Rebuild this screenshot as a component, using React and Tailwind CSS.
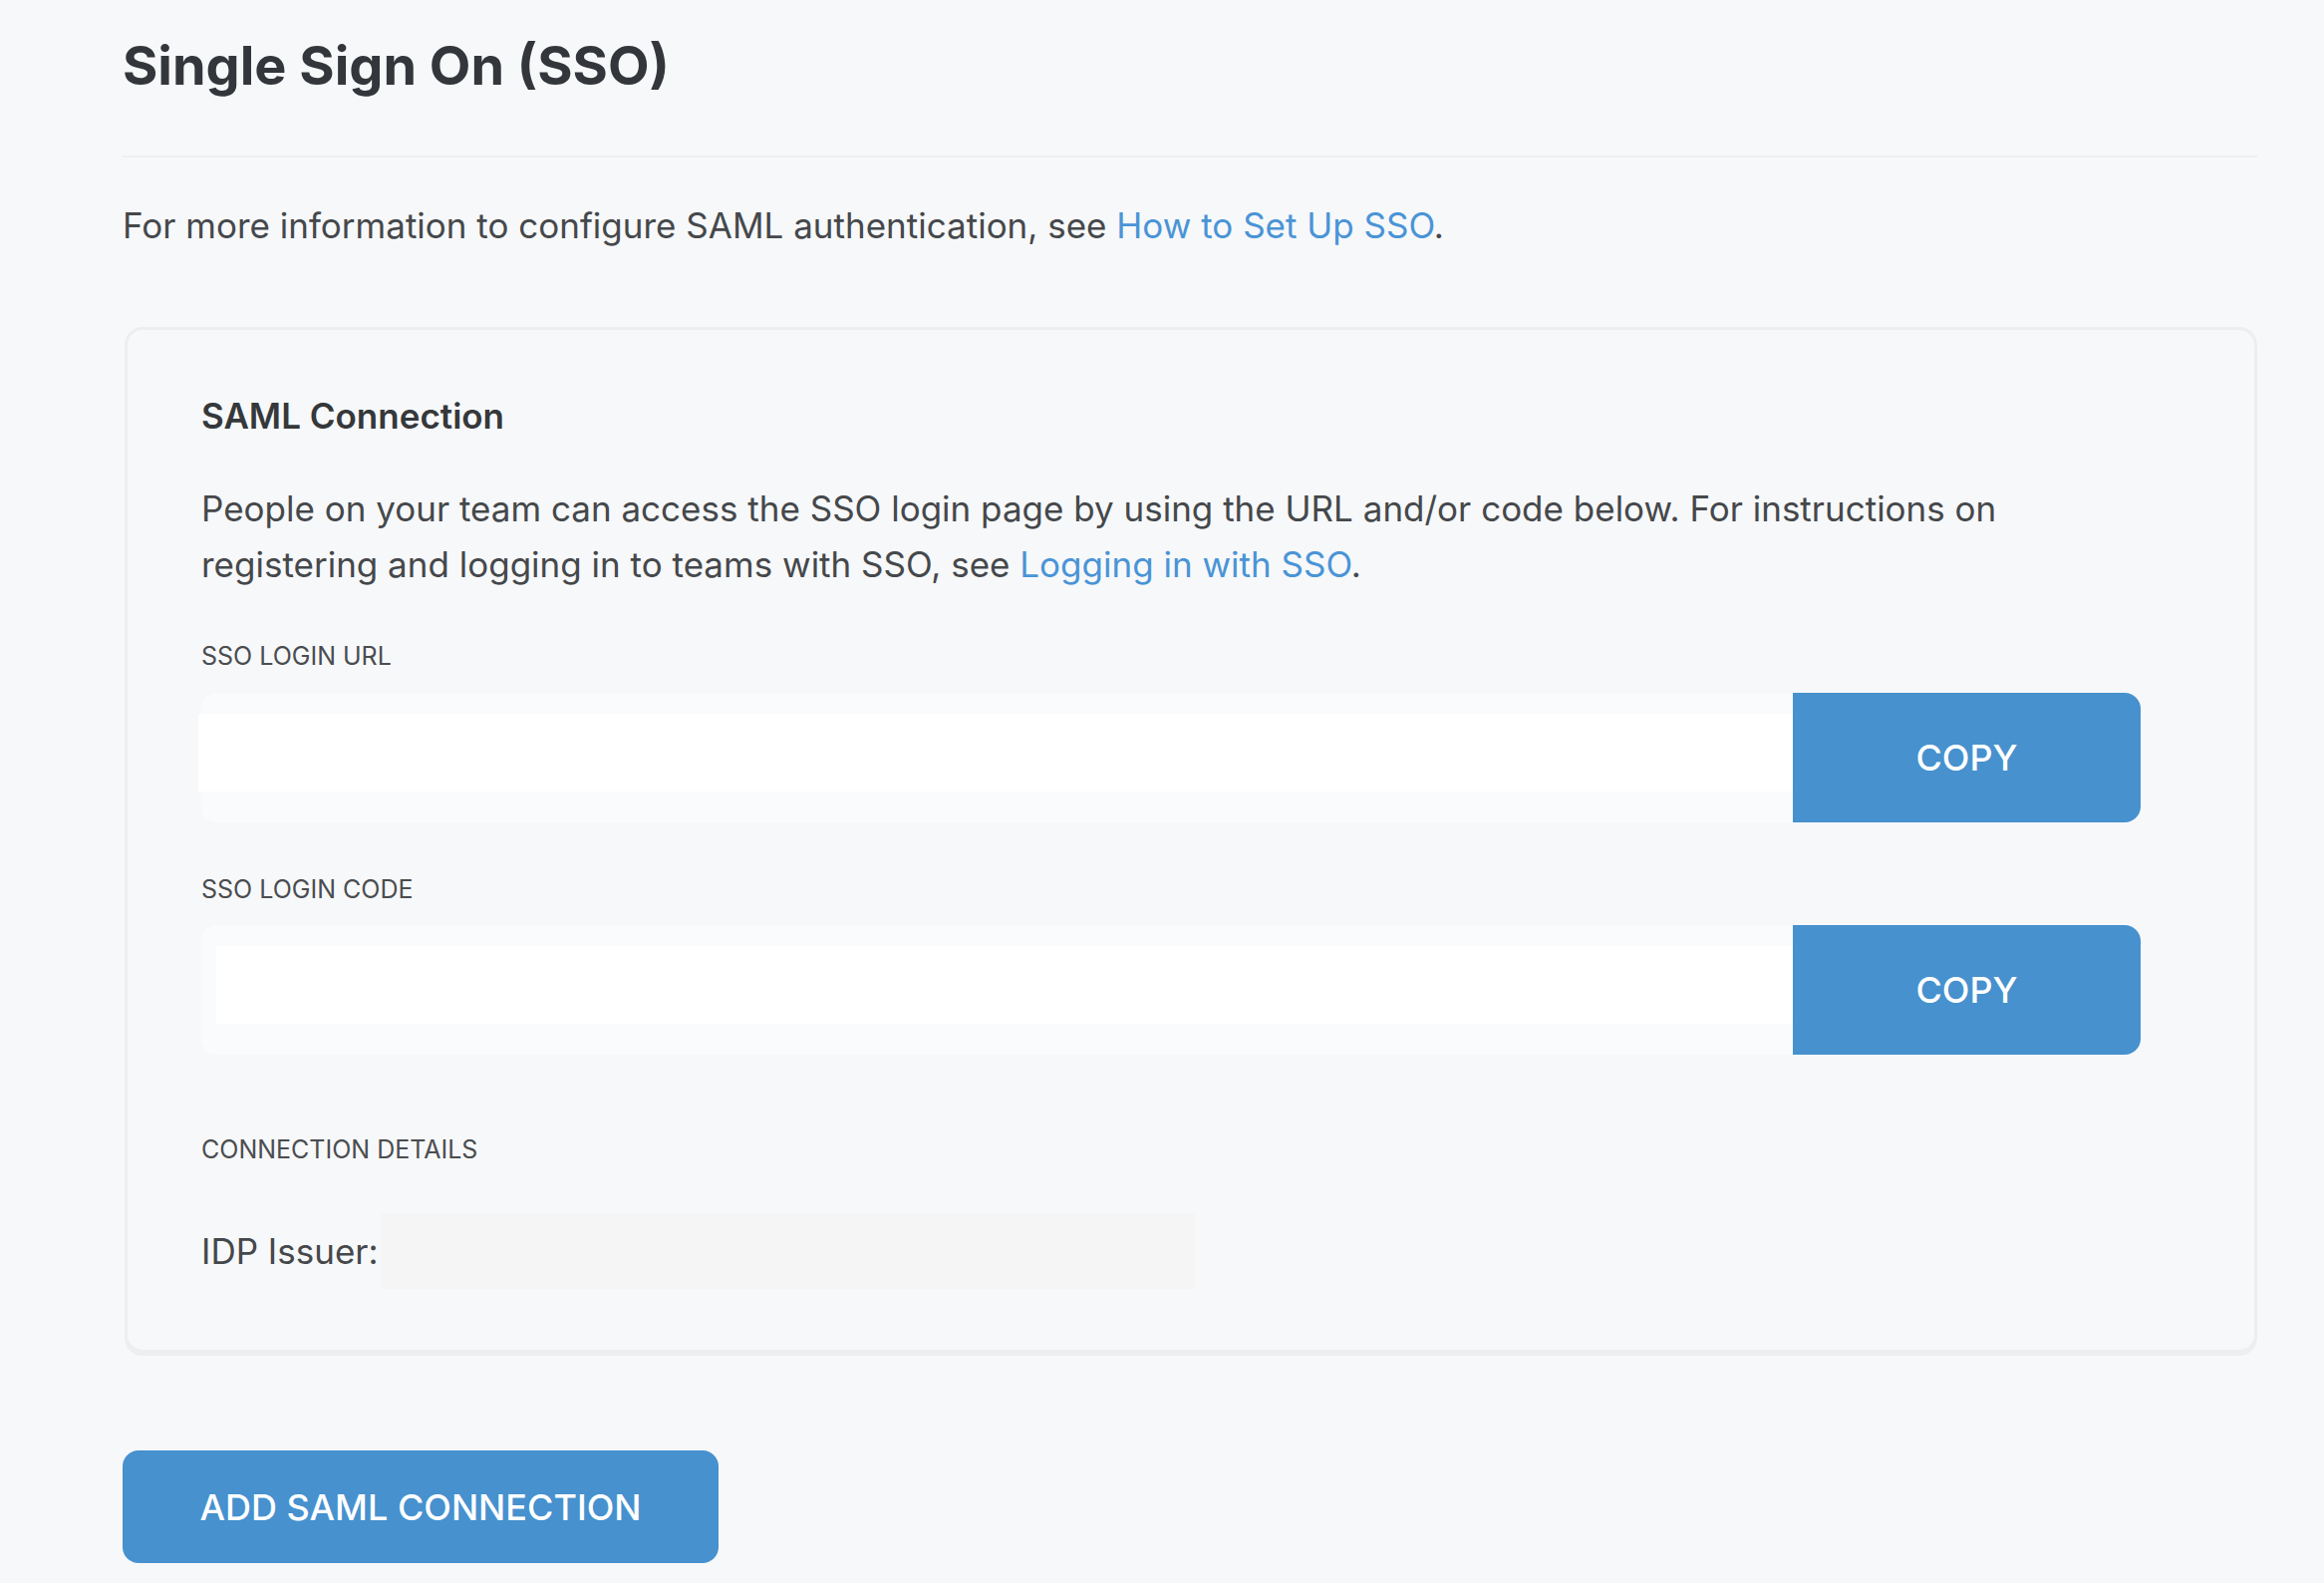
export default function App() {
  const font = { fontFamily: 'Inter, Roboto, "Liberation Sans", sans-serif' };
  return (
    <div style={font} className="min-h-screen w-full bg-[#f7f8fa] pl-[123px] pr-[67px] pt-[38px] pb-[20px] text-[#4a4a4a]">
      <h1 className="text-[54px] leading-[56px] font-bold text-[#33373b]">Single Sign On (SSO)</h1>
      <div className="mt-[62px] h-[2px] bg-[#eeeff1]" />
      <p className="mt-[50px] text-[35px] leading-[36px] text-[#45484b]">
        For more information to configure SAML authentication, see{" "}
        <a className="text-[#4a94d6]">How to Set Up SSO</a>.
      </p>

      <div className="mt-[84px] ml-[2px] w-[2140px] rounded-[18px] border-[3px] border-[#edeef0] pl-[74px] pr-[112px] pt-[68px] pb-[61px] shadow-[0_3px_0_#eceef0]">
        <h2 className="text-[35px] leading-[36px] font-semibold text-[#35383b]">SAML Connection</h2>
        <p className="mt-[47px] text-[35px] leading-[56px] text-[#45484b]">
          People on your team can access the SSO login page by using the URL and/or code below. For instructions on registering and logging in to teams with SSO, see{" "}
          <a className="text-[#4a94d6]">Logging in with SSO</a>.
        </p>

        <div className="mt-[52px] text-[25px] leading-[25px] uppercase text-[#4a4d50]">SSO Login URL</div>
        <div className="mt-[24px] flex h-[130px] w-[1946px]">
          <div className="relative flex-1 rounded-l-[16px] bg-[#fafbfc]">
            <div className="absolute left-[-3px] right-0 top-[21px] h-[78px] bg-white" />
          </div>
          <button className="w-[349px] rounded-r-[16px] bg-[#4691ce] text-[36px] font-medium text-white">COPY</button>
        </div>

        <div className="mt-[55px] text-[25px] leading-[25px] uppercase text-[#4a4d50]">SSO Login Code</div>
        <div className="mt-[23px] flex h-[130px] w-[1946px]">
          <div className="relative flex-1 rounded-l-[16px] bg-[#fafbfc]">
            <div className="absolute left-[15px] right-0 top-[21px] h-[78px] bg-white" />
          </div>
          <button className="w-[349px] rounded-r-[16px] bg-[#4691ce] text-[36px] font-medium text-white">COPY</button>
        </div>

        <div className="mt-[83px] text-[25px] leading-[25px] uppercase text-[#4a4d50]">Connection Details</div>
        <div className="mt-[51px] flex h-[76px] items-center">
          <span className="text-[35px] leading-[36px] text-[#45484b]">IDP Issuer:</span>
          <div className="ml-[3px] h-[76px] w-[816px] bg-[#f5f5f5]" />
        </div>
      </div>

      <button className="mt-[98px] h-[113px] w-[598px] rounded-[16px] bg-[#4691ce] text-[36px] font-medium text-white">
        ADD SAML CONNECTION
      </button>
    </div>
  );
}
